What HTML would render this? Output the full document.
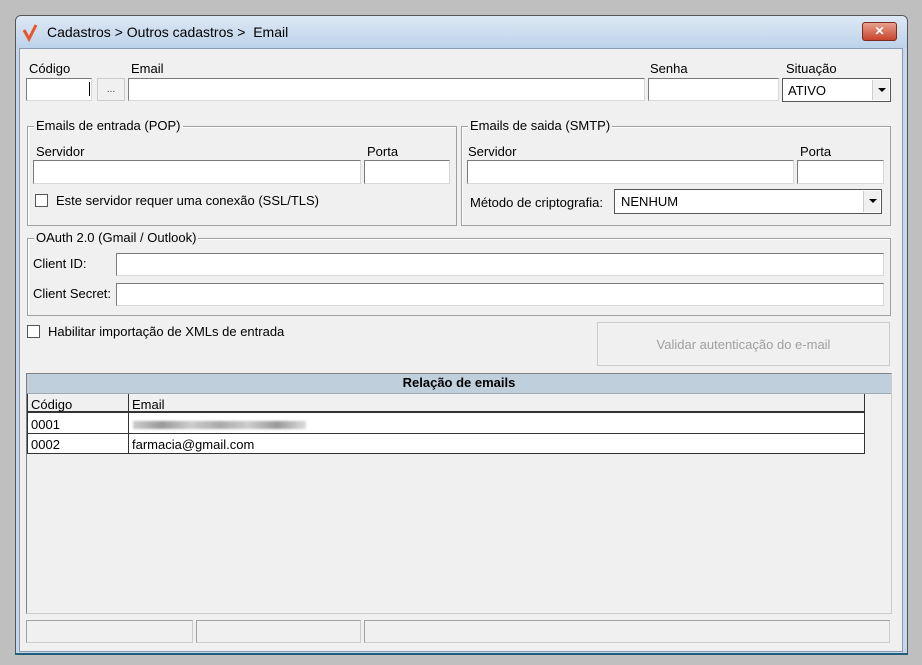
<!DOCTYPE html>
<html><head><meta charset="utf-8"><style>
*{box-sizing:border-box;margin:0;padding:0}
body{width:922px;height:665px;background:#bfbfbf;position:relative;overflow:hidden;font-family:"Liberation Sans",sans-serif;font-size:13px;color:#000}
.a{position:absolute;white-space:nowrap}
.win{left:15px;top:15px;width:893px;height:640px;border:1px solid #555;border-radius:6px 6px 0 0;background:#c4d7ec}
.title{left:16px;top:16px;width:891px;height:32px;background:linear-gradient(#dde8f4,#bcd2ea);border-radius:5px 5px 0 0}
.panel{left:19px;top:48px;width:884px;height:604px;background:#f0f0f0;border:1px solid #8a9bb0}
.in{position:absolute;background:#fff;border:1px solid #7a7a7a;border-right-color:#d8d8d8;border-bottom-color:#d8d8d8}
.grp{position:absolute;border:1px solid #a0a0a0;box-shadow:inset 1px 1px 0 #fff}
.lg{position:absolute;background:#f0f0f0;padding:0 2px;top:-9px;left:6px;white-space:nowrap}
.cb{position:absolute;width:13px;height:13px;border:1px solid #555;background:#fff}
.dd{position:absolute;right:1px;top:1px;width:17px;bottom:1px;background:#f0f0f0;border-left:1px solid #ccc}
.dd:after{content:"";position:absolute;left:5px;top:8px;border:4px solid transparent;border-top:4px solid #000;border-bottom:0}
</style></head><body>
<div class="a win"></div>
<div class="a title"></div>
<svg class="a" style="left:22px;top:24px" width="16" height="18"><path d="M2 6 L7 15 L14 1" stroke="#e8552a" stroke-width="3" fill="none"/></svg>
<div class="a" style="left:47px;top:24px;font-size:14px">Cadastros &gt; Outros cadastros &gt;&nbsp; Email</div>
<div class="a" style="left:862px;top:22px;width:35px;height:19px;border:1px solid #7a2a1e;border-radius:3px;background:linear-gradient(#e9a08f,#c8442c);color:#fff;font-weight:bold;text-align:center;line-height:16px;font-size:12px">✕</div>
<div class="a panel"></div>

<div class="a" style="left:29px;top:61px">Código</div>
<div class="a" style="left:131px;top:61px">Email</div>
<div class="a" style="left:650px;top:61px">Senha</div>
<div class="a" style="left:786px;top:61px">Situação</div>
<div class="in" style="left:26px;top:78px;width:66px;height:23px"><div class="a" style="left:62px;top:3px;width:1px;height:14px;background:#000"></div></div>
<div class="a" style="left:97px;top:78px;width:28px;height:23px;background:#f0f0f0;border:1px solid #ccc;text-align:center;font-size:10px;line-height:22px;color:#444">...</div>
<div class="in" style="left:128px;top:78px;width:517px;height:23px"></div>
<div class="in" style="left:648px;top:78px;width:131px;height:23px"></div>
<div class="in" style="left:782px;top:78px;width:109px;height:24px;border-color:#555"><div class="a" style="left:5px;top:4px">ATIVO</div><div class="dd"></div></div>

<div class="grp" style="left:27px;top:126px;width:430px;height:100px"><div class="lg">Emails de entrada (POP)</div></div>
<div class="a" style="left:36px;top:144px">Servidor</div>
<div class="a" style="left:367px;top:144px">Porta</div>
<div class="in" style="left:33px;top:160px;width:328px;height:24px"></div>
<div class="in" style="left:364px;top:160px;width:86px;height:24px"></div>
<div class="cb" style="left:35px;top:194px"></div>
<div class="a" style="left:56px;top:193px">Este servidor requer uma conexão (SSL/TLS)</div>

<div class="grp" style="left:461px;top:126px;width:430px;height:100px"><div class="lg">Emails de saida (SMTP)</div></div>
<div class="a" style="left:468px;top:144px">Servidor</div>
<div class="a" style="left:800px;top:144px">Porta</div>
<div class="in" style="left:467px;top:160px;width:327px;height:24px"></div>
<div class="in" style="left:797px;top:160px;width:87px;height:24px"></div>
<div class="a" style="left:470px;top:195px">Método de criptografia:</div>
<div class="in" style="left:614px;top:189px;width:268px;height:25px;border-color:#555"><div class="a" style="left:6px;top:4px">NENHUM</div><div class="dd"></div></div>

<div class="grp" style="left:27px;top:238px;width:864px;height:78px"><div class="lg">OAuth 2.0 (Gmail / Outlook)</div></div>
<div class="a" style="left:33px;top:256px">Client ID:</div>
<div class="a" style="left:33px;top:286px">Client Secret:</div>
<div class="in" style="left:116px;top:253px;width:768px;height:23px"></div>
<div class="in" style="left:116px;top:283px;width:768px;height:23px"></div>

<div class="cb" style="left:27px;top:325px"></div>
<div class="a" style="left:48px;top:324px">Habilitar importação de XMLs de entrada</div>
<div class="a" style="left:597px;top:322px;width:293px;height:44px;border:1px solid #ccc;background:#f0f0f0;color:#a0a0a0;text-align:center;line-height:44px">Validar autenticação do e-mail</div>

<div class="a" style="left:26px;top:373px;width:866px;height:241px;border:1px solid #808080;border-right-color:#ccc;border-bottom-color:#ccc;background:#f0f0f0"></div>
<div class="a" style="left:27px;top:374px;width:864px;height:20px;background:#c0cfdc;text-align:center;font-weight:bold;line-height:18px;border-bottom:1px solid #a0a8b0">Relação de emails</div>
<div class="a" style="left:27px;top:394px;width:838px;height:60px;background:#fff;border:1px solid #333;border-top:0"></div>
<div class="a" style="left:28px;top:394px;width:836px;height:19px;background:#f0f0f0;border-bottom:2px solid #333"></div>
<div class="a" style="left:28px;top:433px;width:836px;height:1px;background:#333"></div>
<div class="a" style="left:128px;top:394px;width:1px;height:60px;background:#333"></div>
<div class="a" style="left:31px;top:397px">Código</div><div class="a" style="left:132px;top:397px">Email</div>
<div class="a" style="left:31px;top:417px">0001</div>
<div class="a" style="left:133px;top:421px;width:173px;height:8px;background:linear-gradient(90deg,#ccc,#999,#ccc,#aaa,#ccc,#999,#ddd);filter:blur(1px)"></div>
<div class="a" style="left:31px;top:437px">0002</div><div class="a" style="left:132px;top:437px">farmacia@gmail.com</div>

<div class="a" style="left:26px;top:620px;width:167px;height:23px;border:1px solid #ccc;border-top-color:#a0a0a0;border-left-color:#a0a0a0"></div>
<div class="a" style="left:196px;top:620px;width:165px;height:23px;border:1px solid #ccc;border-top-color:#a0a0a0;border-left-color:#a0a0a0"></div>
<div class="a" style="left:364px;top:620px;width:526px;height:23px;border:1px solid #ccc;border-top-color:#a0a0a0;border-left-color:#a0a0a0"></div>
<div class="a" style="left:15px;top:653px;width:893px;height:2px;background:#1f5f7a"></div>
</body></html>
